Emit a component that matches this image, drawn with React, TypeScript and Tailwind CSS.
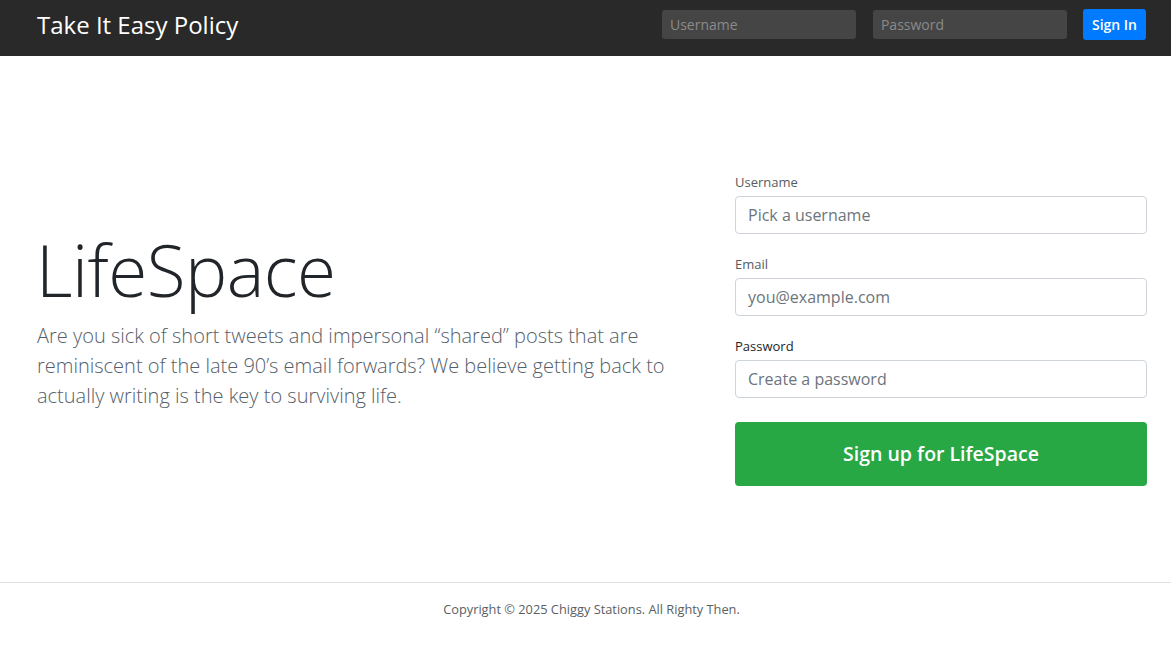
import React from 'react';

const font = { fontFamily: '"Open Sans", "Noto Sans", sans-serif' };

const NavInput: React.FC<{ placeholder: string; type?: string }> = ({ placeholder, type = 'text' }) => (
  <input
    type={type}
    placeholder={placeholder}
    className="w-[194px] h-[29px] rounded-[3px] bg-[#454545] px-2 text-sm text-white placeholder:text-[#8a8a8a] outline-none"
  />
);

const Field: React.FC<{ label: string; placeholder: string; type?: string; dark?: boolean }> = ({
  label,
  placeholder,
  type = 'text',
  dark,
}) => (
  <div className="mb-5">
    <label className={`block mb-1 text-[13px] leading-5 ${dark ? 'text-[#212529]' : 'text-[#555b61]'}`}>{label}</label>
    <input
      type={type}
      placeholder={placeholder}
      className="block w-full h-[38px] rounded-[4px] border border-[#ced4da] bg-white px-3 text-base text-[#495057] placeholder:text-[#6c757d] outline-none"
    />
  </div>
);

export default function App() {
  return (
    <div style={font} className="min-h-screen flex flex-col bg-white text-[#212529]">
      <nav className="h-14 bg-[#292929] flex items-center pb-[7px] pl-[37px] pr-[25px]">
        <a href="#" className="text-white text-[24px] leading-none">
          Take It Easy Policy
        </a>
        <form className="ml-auto flex items-center">
          <div className="ml-px">
            <NavInput placeholder="Username" />
          </div>
          <div className="ml-[17px]">
            <NavInput placeholder="Password" type="password" />
          </div>
          <button
            type="button"
            className="ml-4 h-[31px] px-[9px] rounded-[3px] bg-[#007bff] text-white text-sm font-semibold"
          >
            Sign In
          </button>
        </form>
      </nav>

      <main className="h-[526px] flex items-center pl-[37px] pr-[24px]">
        <div className="flex-1 pr-[50px]">
          <h1 className="text-[71px] font-light leading-[1.2] tracking-[-0.5px] mb-[9px] -ml-[1px]">LifeSpace</h1>
          <p className="text-[20px] font-light leading-[30px] text-[#56606a] max-w-[640px]">
            Are you sick of short tweets and impersonal “shared” posts that are reminiscent of the late 90’s email
            forwards? We believe getting back to actually writing is the key to surviving life.
          </p>
        </div>
        <form className="w-[412px] pt-5">
          <Field label="Username" placeholder="Pick a username" />
          <Field label="Email" placeholder="you@example.com" type="email" />
          <Field label="Password" placeholder="Create a password" type="password" dark />
          <button
            type="button"
            className="mt-1 w-full h-16 rounded-[4px] bg-[#28a745] text-white text-[19.5px] font-semibold"
          >
            Sign up for LifeSpace
          </button>
        </form>
      </main>

      <footer className="flex-1 border-t border-[#e0e0e0] pt-[17px] pl-3 text-center text-[12.8px] text-[#5b5f63]">
        Copyright © 2025 Chiggy Stations. All Righty Then.
      </footer>
    </div>
  );
}
